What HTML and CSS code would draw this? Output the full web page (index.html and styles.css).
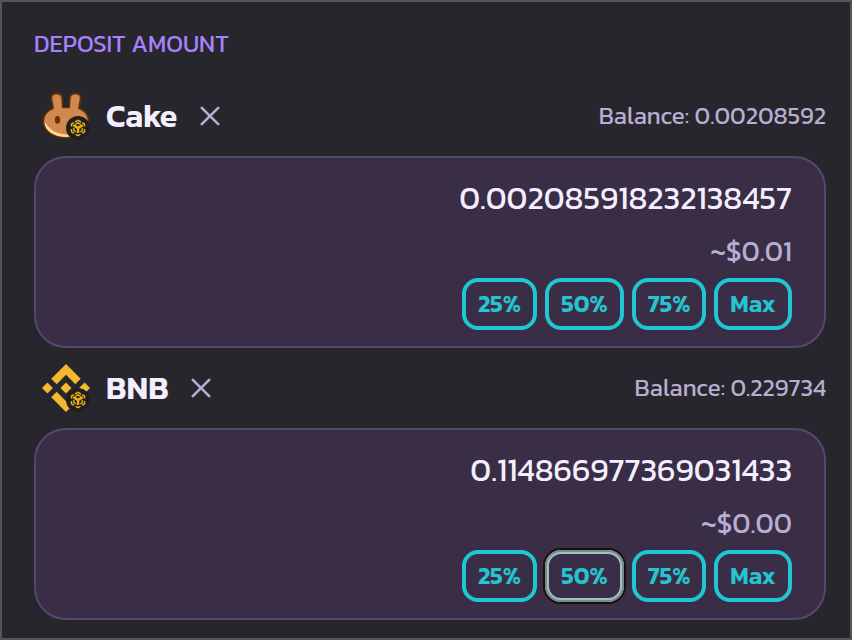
FILE: index.html
```html
<!DOCTYPE html>
<html lang="en">
<head>
<meta charset="utf-8">
<title>Deposit amount</title>
<link rel="stylesheet" href="styles.css">
</head>
<body>
<svg width="0" height="0" class="defs" aria-hidden="true">
  <symbol id="chain" viewBox="0 0 24 24">
    <circle cx="12" cy="12" r="12" fill="#1e1f20"/>
    <g fill="none" stroke="#e9ae12" stroke-width="1.500">
      <path d="M9 6 12 4.400 15 6M7.800 6.700 5.500 8v2.600M16.200 6.700 18.500 8v2.600M5.500 13v2.900L8 17.300M18.500 13v2.900L16 17.300M9.600 18.300 12 19.600l2.400-1.300"/>
      <path d="M7.200 9.200 12 11.900l4.800-2.700M12 11.500v5.500" stroke-width="2.600"/>
      <path d="M9.300 8.300 12 6.900l2.700 1.400M7.900 12v2.800l2 1.200M16.100 12v2.800l-2 1.200" stroke-width="1.400"/>
    </g>
  </symbol>
  <symbol id="cross" viewBox="0 0 20 20">
    <path d="M1.800 1.800 18.200 18.200M18.200 1.800 1.800 18.200" fill="none" stroke="#b8add2" stroke-width="2.600" stroke-linecap="round"/>
  </symbol>
</svg>
<main class="panel">
  <h1 class="title">DEPOSIT AMOUNT</h1>

  <section class="token">
    <header class="head">
      <span class="logo">
        <svg viewBox="0 0 48 48" width="48" height="48">
          <path d="M10.500 16 8.500 6.800C7.800 2.800 10.300.7 14.500.7c4.700 0 6.700 2.300 6.700 5.800v8.300h5.600V6.500c0-3.500 2-5.800 6.700-5.800 4.200 0 6.700 2.100 6 6.100L37.900 15.700C43.700 18.500 47.400 23 47.400 28.800 47.400 39.800 37 46.600 24 46.600S.6 39.800.6 28.800c0-6 3.700-10.500 9.900-12.800z" fill="#633001"/>
          <path d="M2.300 29C2.300 39 12 45 24 45s21.700-6 21.700-16z" fill="#fedc90"/>
          <path d="M12 16.700 10.300 6.700C9.800 3.900 11.500 2.400 14.500 2.400c3.200 0 4.800 1.300 4.900 4.300l.5 9.500h8.200l.5-9.500c.1-3 1.800-4.300 4.900-4.300 3 0 4.700 1.500 4.200 4.300l-1.700 10c5.600 2.100 9.700 6.300 9.700 11.800C45.700 37 37.500 42.500 26 42.500 14.500 42.500 7 37.500 2.300 29c0-5.700 4-10.100 9.700-12.300z" fill="#d1884f"/>
          <ellipse cx="15.500" cy="27.900" rx="2.600" ry="3.800" fill="#633001"/>
        </svg>
        <svg class="chain" width="24" height="24"><use href="#chain"/></svg>
      </span>
      <h2 class="name cake">Cake</h2>
      <svg class="cross" width="20" height="20"><use href="#cross"/></svg>
      <span class="balance">Balance: 0.00208592</span>
    </header>
    <div class="card">
      <div class="amount">0.002085918232138457</div>
      <div class="fiat">~$0.01</div>
      <div class="buttons">
        <button class="btn w25">25%</button>
        <button class="btn w50">50%</button>
        <button class="btn w75">75%</button>
        <button class="btn wmax">Max</button>
      </div>
    </div>
  </section>

  <section class="token">
    <header class="head">
      <span class="logo">
        <svg viewBox="0 0 126.610 126.610" width="48" height="48" fill="#f3ba2f">
          <path d="M38.730 53.200 63.310 28.620 87.900 53.210 102.200 38.910 63.310 0 24.430 38.900zM0 63.310 14.300 49 28.600 63.310 14.300 77.610zM38.730 73.410 63.310 98 87.900 73.400 102.210 87.690 63.310 126.610 24.420 87.720zM98 63.310 112.300 49 126.610 63.310 112.300 77.610zM77.830 63.300 63.310 48.780 48.790 63.310 63.310 77.820z"/>
        </svg>
        <svg class="chain" width="24" height="24"><use href="#chain"/></svg>
      </span>
      <h2 class="name bnb">BNB</h2>
      <svg class="cross" width="20" height="20"><use href="#cross"/></svg>
      <span class="balance">Balance: 0.229734</span>
    </header>
    <div class="card">
      <div class="amount">0.114866977369031433</div>
      <div class="fiat">~$0.00</div>
      <div class="buttons">
        <button class="btn w25">25%</button>
        <button class="btn w50 focused">50%</button>
        <button class="btn w75">75%</button>
        <button class="btn wmax">Max</button>
      </div>
    </div>
  </section>
</main>
</body>
</html>
```
FILE: styles.css
```css
* { box-sizing: border-box; }
body { margin: 0; background: #27262c; font-family: Kanit, "Noto Sans", sans-serif; }
.defs { display: block; }
.panel {
  width: 852px;
  height: 640px;
  border: 2px solid #565656;
  padding: 26px 24px 0 32px;
  background: #27262c;
  overflow: hidden;
}
.title {
  margin: 0 0 20px;
  height: 32px;
  font-size: 24px;
  font-weight: 400;
  line-height: 32px;
  color: #a881fc;
  white-space: nowrap;
}
.head {
  display: flex;
  align-items: center;
  height: 76px;
  padding: 0 0 4px 8px;
}
.token + .token .head { height: 80px; padding-bottom: 0; }
.logo { position: relative; width: 48px; height: 48px; flex: none; }
.logo svg { display: block; }
.logo .chain { position: absolute; right: 0; bottom: 0; }
.name {
  margin: 0 22px 0 16px;
  font-size: 32px;
  line-height: 40px;
  font-weight: 600;
  color: #f4eeff;
  white-space: nowrap;
}
.cake { width: 72px; }
.bnb { width: 63px; }
.balance {
  margin-left: auto;
  font-size: 24px;
  line-height: 32px;
  color: #b8add2;
  white-space: nowrap;
}
.card {
  height: 192px;
  padding: 16px 32px 0;
  border: 2px solid #55476e;
  border-radius: 32px;
  background: #392e45;
  text-align: right;
}
.amount {
  height: 50px;
  font-size: 32px;
  line-height: 48px;
  color: #f4eeff;
  white-space: nowrap;
}
.fiat {
  height: 54px;
  font-size: 28px;
  line-height: 54px;
  color: #b8add2;
  white-space: nowrap;
}
.buttons { display: flex; justify-content: flex-end; gap: 8px; }
.btn {
  height: 52px;
  padding: 0;
  border: 4px solid #21c6d4;
  border-radius: 16px;
  background: transparent;
  color: #27c3d1;
  font: 600 24px/44px Kanit, "Noto Sans", sans-serif;
  text-align: center;
  white-space: nowrap;
}
.w25 { width: 75px; }
.w50 { width: 79px; }
.w75 { width: 74px; }
.wmax { width: 78px; }
.focused {
  position: relative;
  outline: none;
  border-color: #94c3cb;
  box-shadow: 0 0 0 2px #121212;
}
.focused::after {
  content: "";
  position: absolute;
  inset: -4px;
  border: 2px solid #858585;
  border-radius: 16px;
}
```
